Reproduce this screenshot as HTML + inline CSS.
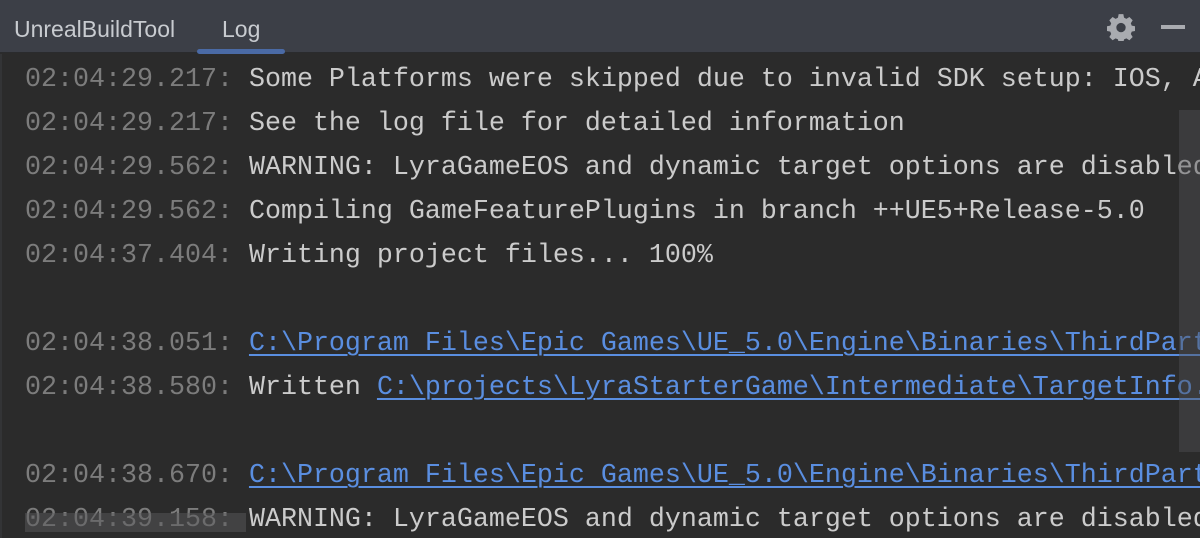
<!DOCTYPE html>
<html><head><style>
html,body{margin:0;padding:0;width:1200px;height:538px;overflow:hidden;background:#2b2b2b}
.hdr{position:absolute;left:0;top:0;width:1200px;height:53px;background:#3c3f47;border-bottom:1px solid #2a2b2d;box-sizing:border-box}
.tab{position:absolute;top:16px;font:23px "Liberation Sans",sans-serif;color:#c8cbd0}
.ul{position:absolute;left:197px;top:49px;width:88px;height:5px;border-radius:3px;background:#4a6aa5}
.lines{position:absolute;left:25px;top:58px;width:1175px;height:480px;overflow:hidden;font:26.67px/44px "Liberation Mono",monospace;color:#cbcbcb;white-space:pre}
.t{color:#7c7c7c}
a{color:#5a8ee0;text-decoration:underline;text-decoration-thickness:2px;text-underline-offset:4px}
.vs{position:absolute;left:1179px;top:110px;width:21px;height:342px;background:rgba(80,80,84,.45)}
.hs{position:absolute;left:25px;top:513px;width:221px;height:19px;background:rgba(90,90,92,.5)}
.lb{position:absolute;left:0;top:54px;width:2px;height:484px;background:#333436}
</style></head><body>
<div class="hdr">
<div class="tab" style="left:14px">UnrealBuildTool</div>
<div class="tab" style="left:222px">Log</div>
<div class="ul"></div>
<svg style="position:absolute;left:1107px;top:13px" width="28" height="28" viewBox="0 0 24 24"><path fill="#a9abb0" d="M10 1h4l.6 3 2 1 2.6-1.6 2.8 2.8L20.4 8.8l.8 2 2.8.6v4l-2.8.6-.8 2 1.6 2.6-2.8 2.8-2.6-1.6-2 .8-.6 2.8h-4l-.6-2.8-2-.8-2.6 1.6-2.8-2.8 1.6-2.6-.8-2L0 15.4v-4l2.8-.6.8-2L2 6.2 4.8 3.4l2.6 1.6 2-1zM12 8.5a4 4 0 1 0 0 8 4 4 0 1 0 0-8z"/></svg>
<div style="position:absolute;left:1161px;top:25px;width:24px;height:4px;background:#a9abb0"></div>
</div>
<div class="lb"></div>
<div class="lines"><span class="t">02:04:29.217: </span>Some Platforms were skipped due to invalid SDK setup: IOS, Android
<span class="t">02:04:29.217: </span>See the log file for detailed information
<span class="t">02:04:29.562: </span>WARNING: LyraGameEOS and dynamic target options are disabled
<span class="t">02:04:29.562: </span>Compiling GameFeaturePlugins in branch ++UE5+Release-5.0
<span class="t">02:04:37.404: </span>Writing project files... 100%

<span class="t">02:04:38.051: </span><a>C:\Program Files\Epic Games\UE_5.0\Engine\Binaries\ThirdParty</a>
<span class="t">02:04:38.580: </span>Written <a>C:\projects\LyraStarterGame\Intermediate\TargetInfo.json</a>

<span class="t">02:04:38.670: </span><a>C:\Program Files\Epic Games\UE_5.0\Engine\Binaries\ThirdParty</a>
<span class="t">02:04:39.158: </span>WARNING: LyraGameEOS and dynamic target options are disabled</div>
<div class="vs"></div>
<div class="hs"></div>
</body></html>
